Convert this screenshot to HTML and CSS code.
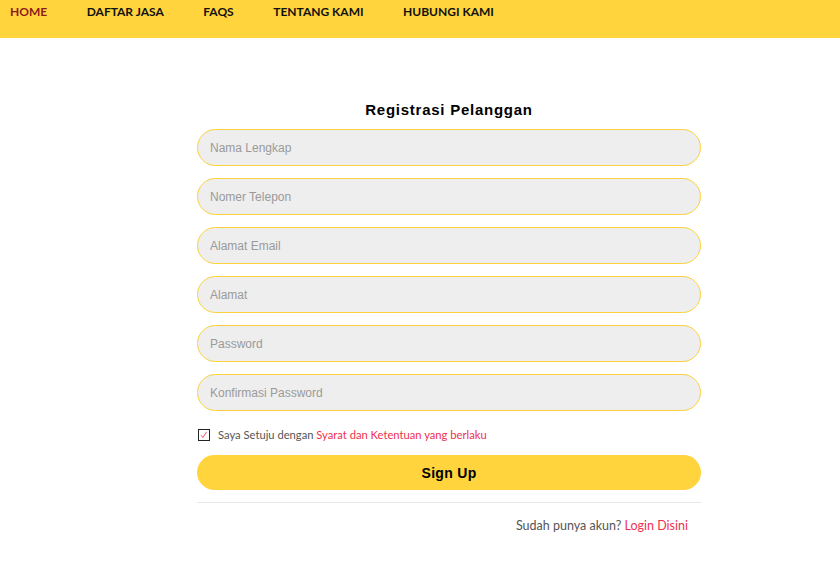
FILE: index.html
```html
<!DOCTYPE html>
<html lang="id">
<head>
<meta charset="utf-8">
<title>Registrasi Pelanggan</title>
<link rel="stylesheet" href="styles.css">
</head>
<body>
<nav class="topnav">
  <a class="nav-link active" href="#">HOME</a>
  <a class="nav-link" href="#">DAFTAR JASA</a>
  <a class="nav-link" href="#">FAQS</a>
  <a class="nav-link" href="#">TENTANG KAMI</a>
  <a class="nav-link" href="#">HUBUNGI KAMI</a>
</nav>
<main class="page">
  <form class="reg-form">
    <h1 class="title">Registrasi Pelanggan</h1>
    <input class="field" type="text" placeholder="Nama Lengkap">
    <input class="field" type="text" placeholder="Nomer Telepon">
    <input class="field" type="text" placeholder="Alamat Email">
    <input class="field" type="text" placeholder="Alamat">
    <input class="field" type="password" placeholder="Password">
    <input class="field" type="password" placeholder="Konfirmasi Password">
    <label class="agree">
      <svg class="check" width="12" height="12" viewBox="0 0 12 12"><rect x="0.5" y="0.5" width="11" height="11" fill="#fff" stroke="#222" stroke-width="1"/><path d="M3 6.2 L5 8.6 L8.6 2.8" fill="none" stroke="#f0566a" stroke-width="1"/></svg>
      <span>Saya Setuju dengan <a class="red" href="#">Syarat dan Ketentuan yang berlaku</a></span>
    </label>
    <button class="btn" type="button">Sign Up</button>
    <hr class="sep">
    <p class="login">Sudah punya akun? <a class="red" href="#">Login Disini</a></p>
  </form>
</main>
</body>
</html>
```

FILE: styles.css
```css
* { box-sizing: border-box; }
body {
  margin: 0;
  background: #fff;
  font-family: Lato, "Liberation Sans", sans-serif;
}
.topnav {
  height: 38px;
  background: #ffd43d;
  display: flex;
  align-items: flex-start;
  padding: 4px 0 0 10px;
  gap: 39.5px;
}
.nav-link {
  font-family: Lato, sans-serif;
  font-weight: 700;
  font-size: 12px;
  line-height: 15px;
  color: #111;
  text-decoration: none;
}
.nav-link.active { color: #8e1b1b; }
.page {
  display: flex;
  justify-content: center;
  padding-top: 63px;
}
.reg-form {
  width: 504px;
  display: flex;
  flex-direction: column;
  margin-left: 58px;
}
.title {
  margin: 0 0 10px;
  text-align: center;
  font-family: "Liberation Sans", Arial, sans-serif;
  font-size: 15px;
  line-height: 18px;
  font-weight: 700;
  letter-spacing: 0.75px;
  color: #000;
}
.field {
  height: 37px;
  margin: 0 0 12px;
  border: 1px solid #fcd23a;
  border-radius: 19px;
  background: #eeeeee;
  padding: 0 12px;
  font-family: "Liberation Sans", Arial, sans-serif;
  font-size: 12px;
  color: #333;
  outline: none;
}
.field::placeholder { color: #9a9a9a; }
.agree {
  display: flex;
  align-items: center;
  gap: 8px;
  margin: 5px 0 0 1px;
  font-family: Lato, sans-serif;
  font-size: 11.2px;
  line-height: 14px;
  color: #555;
}
.check { flex: none; }
.red { color: #f0304d; text-decoration: none; }
.btn {
  margin-top: 13px;
  height: 35px;
  border: none;
  border-radius: 18px;
  background: #ffd43d;
  font-family: "Liberation Sans", Arial, sans-serif;
  font-weight: 700;
  font-size: 14px;
  letter-spacing: 0.3px;
  color: #000;
}
.sep {
  margin: 12px 0 0;
  border: none;
  border-top: 1px solid #e6e6e6;
}
.login {
  margin: 15px 13px 0 0;
  text-align: right;
  font-family: Lato, sans-serif;
  font-size: 12.5px;
  line-height: 16px;
  color: #555;
}
```
